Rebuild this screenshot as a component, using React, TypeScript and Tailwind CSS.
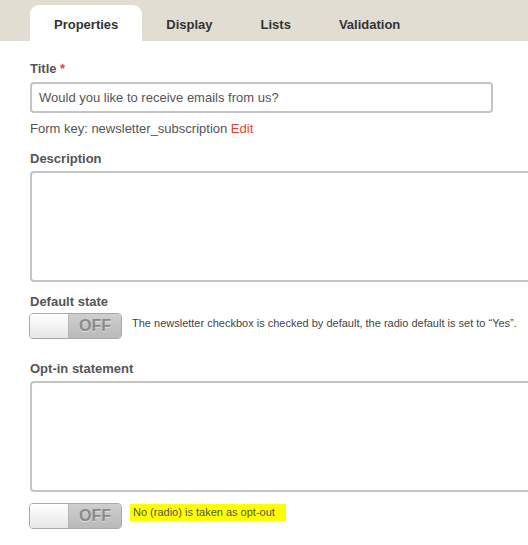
function Toggle() {
  return (
    <div className="-ml-[1px] flex h-[26px] w-[93px] shrink-0 overflow-hidden rounded-[4px] border border-[#a9a9a9]">
      <div className="h-full w-[39px] border-r border-[#b5b5b5] bg-gradient-to-b from-[#ffffff] to-[#e6e6e6]"></div>
      <div className="flex flex-1 items-center justify-center bg-gradient-to-b from-[#cfcfcf] to-[#b9b9b9] text-[16px] font-bold text-[#8a8a8a] [text-shadow:0_1px_0_#e0e0e0]">
        OFF
      </div>
    </div>
  )
}

export default function App() {
  return (
    <div className="h-[545px] w-[528px] overflow-hidden bg-white font-['Liberation_Sans',Arial,sans-serif] text-[13px] text-[#555]">
      <div className="flex h-[41px] items-end bg-[#e1ddd3] pl-[30px]">
        <div className="flex h-[36px] items-center rounded-t-[9px] bg-white px-[24px] pt-[3px] font-bold text-[#333]">Properties</div>
        <div className="flex h-[36px] items-center px-[24px] pt-[3px] font-bold text-[#333]">Display</div>
        <div className="flex h-[36px] items-center px-[24px] pt-[3px] font-bold text-[#333]">Lists</div>
        <div className="flex h-[36px] items-center px-[24px] pt-[3px] font-bold text-[#333]">Validation</div>
      </div>

      <div className="px-[30px] pt-[20px]">
        <div className="h-4 leading-4 font-bold">
          Title <span className="text-[#e0413a]">*</span>
        </div>
        <div className="mt-[5px] flex h-[31px] w-[463px] items-center rounded-[4px] border-2 border-[#c4c4c4] px-[7px]">
          Would you like to receive emails from us?
        </div>
        <div className="mt-[8px] h-4 leading-4">
          Form key: newsletter_subscription <span className="text-[#d9482b]">Edit</span>
        </div>

        <div className="mt-[14px] h-4 leading-4 font-bold">Description</div>
        <div className="mt-[4px] h-[111px] w-[540px] rounded-[4px] border-2 border-[#c4c4c4]"></div>

        <div className="mt-[12px] h-4 leading-4 font-bold">Default state</div>
        <div className="mt-[3px] flex items-start gap-[10px]">
          <Toggle />
          <div className="mt-[4px] whitespace-nowrap text-[11px] leading-[13px] text-[#444]">
            The newsletter checkbox is checked by default, the radio default is set to “Yes”.
          </div>
        </div>

        <div className="mt-[22px] h-4 leading-4 font-bold">Opt-in statement</div>
        <div className="mt-[4px] h-[111px] w-[540px] rounded-[4px] border-2 border-[#c4c4c4]"></div>

        <div className="mt-[11px] flex items-start gap-[8px]">
          <Toggle />
          <div className="mt-[1px] bg-[#ffff00] py-[2px] pl-[3px] pr-[11px] text-[11px] leading-[13px] text-[#555]">
            No (radio) is taken as opt-out
          </div>
        </div>
      </div>
    </div>
  )
}
